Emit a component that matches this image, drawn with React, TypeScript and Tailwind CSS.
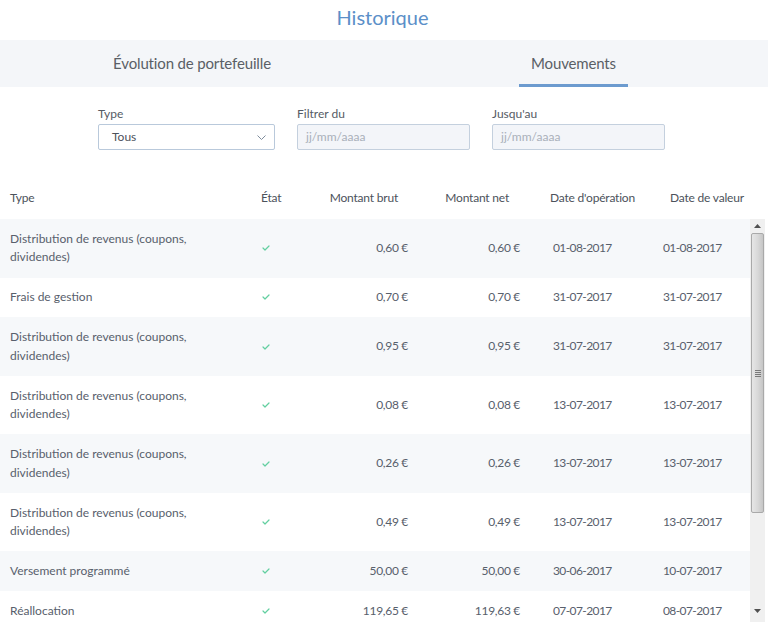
import React from "react";

type Row = { type: string; brut: string; net: string; op: string; val: string };

const rows: Row[] = [
  { type: "Distribution de revenus (coupons, dividendes)", brut: "0,60 €", net: "0,60 €", op: "01-08-2017", val: "01-08-2017" },
  { type: "Frais de gestion", brut: "0,70 €", net: "0,70 €", op: "31-07-2017", val: "31-07-2017" },
  { type: "Distribution de revenus (coupons, dividendes)", brut: "0,95 €", net: "0,95 €", op: "31-07-2017", val: "31-07-2017" },
  { type: "Distribution de revenus (coupons, dividendes)", brut: "0,08 €", net: "0,08 €", op: "13-07-2017", val: "13-07-2017" },
  { type: "Distribution de revenus (coupons, dividendes)", brut: "0,26 €", net: "0,26 €", op: "13-07-2017", val: "13-07-2017" },
  { type: "Distribution de revenus (coupons, dividendes)", brut: "0,49 €", net: "0,49 €", op: "13-07-2017", val: "13-07-2017" },
  { type: "Versement programmé", brut: "50,00 €", net: "50,00 €", op: "30-06-2017", val: "10-07-2017" },
  { type: "Réallocation", brut: "119,65 €", net: "119,63 €", op: "07-07-2017", val: "08-07-2017" },
];

function Check() {
  return (
    <svg width="8" height="6" viewBox="0 0 8 6" fill="none">
      <polyline points="1,3 3,5 7,1" stroke="#62cfa0" strokeWidth="1.2" strokeLinecap="round" strokeLinejoin="round" />
    </svg>
  );
}

function Scrollbar() {
  return (
    <div className="w-[15px] shrink-0 bg-[#f0f0f0] flex flex-col items-center">
      <div className="h-[14px] w-full flex items-center justify-center">
        <svg width="7" height="4" viewBox="0 0 7 4">
          <polygon points="0,4 3.5,0 7,4" fill="#505050" />
        </svg>
      </div>
      <div className="h-[280px] w-[13px] rounded-[2px] border border-[#a9a9a9] bg-gradient-to-r from-[#e6e6e6] via-[#d9d9d9] to-[#c6c6c6] flex flex-col items-center justify-center gap-[1px]">
        <div className="w-[6px] h-[1px] bg-[#7a7a7a]" />
        <div className="w-[6px] h-[1px] bg-[#7a7a7a]" />
        <div className="w-[6px] h-[1px] bg-[#7a7a7a]" />
        <div className="w-[6px] h-[1px] bg-[#7a7a7a]" />
      </div>
      <div className="flex-1" />
      <div className="h-[14px] w-full flex items-center justify-center mb-[4px]">
        <svg width="7" height="4" viewBox="0 0 7 4">
          <polygon points="0,0 3.5,4 7,0" fill="#505050" />
        </svg>
      </div>
    </div>
  );
}

export default function App() {
  return (
    <div
      className="w-[768px] h-[622px] overflow-hidden bg-white text-[#58606c] flex flex-col"
      style={{ fontFamily: "Lato, 'Open Sans', sans-serif" }}
    >
      <div className="h-[40px] flex justify-center">
        <h1 className="text-[20px] leading-[34px] text-[#5b8fc8] mr-[3px]">Historique</h1>
      </div>

      <div className="h-[47px] bg-[#f4f6f9] flex">
        <div className="w-[384px] flex items-center justify-center text-[15px] text-[#5a5f66] pb-[1px]">
          <span className="tracking-[-0.15px]">Évolution de portefeuille</span>
        </div>
        <div className="w-[384px] flex items-center justify-center">
          <div className="h-full px-[12px] ml-[-5px] flex items-center border-b-[3px] border-[#6c9bcf] pt-[3px] text-[15px] text-[#5a5f66] tracking-[-0.15px]">
            Mouvements
          </div>
        </div>
      </div>

      <div className="flex pl-[98px] gap-[22px] pt-[19px] h-[93px]">
        <div className="w-[177px] flex flex-col">
          <label className="text-[12px] leading-[16px] text-[#555b64] mb-[2px]">Type</label>
          <div className="h-[26px] border border-[#b9c9db] rounded-[2px] bg-white flex items-center justify-between pl-[13px] pr-[8px] text-[12px] text-[#4c525b]">
            <span>Tous</span>
            <svg width="9" height="5" viewBox="0 0 9 5" fill="none">
              <polyline points="0.5,0.5 4.5,4.5 8.5,0.5" stroke="#7e8c9c" strokeWidth="1" />
            </svg>
          </div>
        </div>
        <div className="w-[173px] flex flex-col">
          <label className="text-[12px] leading-[16px] text-[#555b64] mb-[2px]">Filtrer du</label>
          <div className="h-[26px] border border-[#c4d0de] rounded-[2px] bg-[#f3f5f9] flex items-center pl-[8px] text-[12px] text-[#a9b0ba]">
            jj/mm/aaaa
          </div>
        </div>
        <div className="w-[173px] flex flex-col">
          <label className="text-[12px] leading-[16px] text-[#555b64] mb-[2px]">Jusqu'au</label>
          <div className="h-[26px] border border-[#c4d0de] rounded-[2px] bg-[#f3f5f9] flex items-center pl-[8px] text-[12px] text-[#a9b0ba]">
            jj/mm/aaaa
          </div>
        </div>
      </div>

      <div className="h-[39px] flex items-center text-[12px] text-[#4c525b] pb-[3px] tracking-[-0.2px]">
        <div className="w-[250px] pl-[10px]">Type</div>
        <div className="w-[60px] pl-[11px]">État</div>
        <div className="w-[88px] text-right">Montant brut</div>
        <div className="w-[111px] text-right">Montant net</div>
        <div className="w-[161px] pl-[41px]">Date d'opération</div>
        <div className="flex-1">Date de valeur</div>
      </div>

      <div className="flex-1 flex pr-[3px] overflow-hidden">
        <div className="flex-1 flex flex-col overflow-hidden">
          {rows.map((r, i) => (
            <div
              key={i}
              className={`shrink-0 flex items-center py-[10.7px] text-[12px] leading-[18.57px] ${i % 2 === 0 ? "bg-[#f6f8fa]" : "bg-white"}`}
            >
              <div className="w-[250px] pl-[10px]">
                <div className="w-[200px]">{r.type}</div>
              </div>
              <div className="w-[50px] pl-[12px] flex items-center">
                <Check />
              </div>
              <div className="w-[108px] text-right tracking-[-0.3px]">{r.brut}</div>
              <div className="w-[112px] text-right tracking-[-0.3px]">{r.net}</div>
              <div className="w-[143px] pl-[33px] tracking-[-0.6px]">{r.op}</div>
              <div className="flex-1 tracking-[-0.6px]">{r.val}</div>
            </div>
          ))}
        </div>
        <Scrollbar />
      </div>
    </div>
  );
}
